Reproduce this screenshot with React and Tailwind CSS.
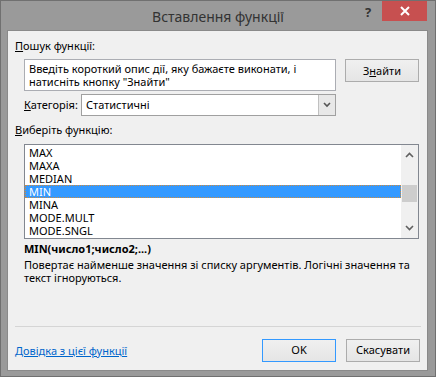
export default function App() {
  const items = ["MAX", "MAXA", "MEDIAN", "MIN", "MINA", "MODE.MULT", "MODE.SNGL"];
  return (
    <div className="w-[436px] h-[377px] bg-[#9a9a9a] border border-[#707070] flex flex-col font-['Noto_Sans',sans-serif] text-[11px] text-black overflow-hidden">
      {/* Title bar */}
      <div className="relative h-[29px] flex justify-center">
        <div className="pt-[6px] text-[14px] leading-[20px] text-[#333333]">Вставлення функції</div>
        <div className="absolute left-[361px] top-[2px] w-[12px] text-center text-[13px] font-bold leading-[18px] text-[#333333]">?</div>
        <div className="absolute right-[8px] top-0 w-[45px] h-[20px] bg-[#c75050] flex items-center justify-center">
          <svg width="10" height="10" viewBox="0 0 10 10">
            <path d="M1 1 L9 9 M9 1 L1 9" stroke="white" strokeWidth="2" />
          </svg>
        </div>
      </div>
      {/* Client */}
      <div className="ml-[6px] w-[421px] h-[341px] border border-[#8a8a8a] bg-[#f0f0f0] flex flex-col pl-[7px] pr-[7px] pt-[7px]">
        <div className="leading-[16px] h-[16px]"><span className="underline">П</span>ошук функції:</div>
        <div className="mt-[5px] flex items-start">
          <div className="ml-[9px] w-[312px] h-[32px] bg-white border border-[#abadb3] px-[4px] pt-[2px] leading-[13px]">
            Введіть короткий опис дії, яку бажаєте виконати, і натисніть кнопку "Знайти"
          </div>
          <button className="ml-[9px] w-[74px] h-[23px] border border-[#acacac] bg-[linear-gradient(#f0f0f0,#e5e5e5)] flex items-center justify-center leading-[16px]">
            З<span className="underline">н</span>айти
          </button>
        </div>
        <div className="mt-[3px] flex items-center h-[22px]">
          <div className="ml-[9px] w-[57px]"><span className="underline">К</span>атегорія:</div>
          <div className="w-[255px] h-[22px] bg-white border border-[#a0a0a0] flex">
            <div className="flex-1 pl-[4px] leading-[20px]">Статистичні</div>
            <div className="w-[17px] h-full bg-[#e8e8e8] border-l border-[#c0c0c0] flex items-center justify-center">
              <svg width="8" height="6" viewBox="0 0 8 6">
                <path d="M1 1 L4 4 L7 1" stroke="#555" strokeWidth="1.6" fill="none" />
              </svg>
            </div>
          </div>
        </div>
        <div className="mt-[6px] leading-[16px] h-[16px]"><span className="underline">В</span>иберіть функцію:</div>
        <div className="mt-[6px] ml-[9px] w-[395px] h-[95px] border border-[#828790] bg-white flex">
          <div className="flex-1 pt-[1px]">
            {items.map((it) => (
              <div
                key={it}
                className={
                  it === "MIN"
                    ? "h-[13px] leading-[11px] pl-[3px] bg-[#3399ff] text-white border border-dotted border-[#d08a3a]"
                    : "h-[13px] leading-[13px] pl-[4px]"
                }
              >
                {it}
              </div>
            ))}
          </div>
          <div className="w-[17px] bg-[#f0f0f0] flex flex-col items-center">
            <div className="h-[20px] flex items-center justify-center">
              <svg width="9" height="6" viewBox="0 0 9 6">
                <path d="M1 5 L4.5 1.5 L8 5" stroke="#606060" strokeWidth="1.6" fill="none" />
              </svg>
            </div>
            <div className="flex-1 w-full">
              <div className="mt-[20px] mx-auto w-[15px] h-[17px] bg-[#cdcdcd]"></div>
            </div>
            <div className="h-[20px] flex items-center justify-center">
              <svg width="9" height="6" viewBox="0 0 9 6">
                <path d="M1 1 L4.5 4.5 L8 1" stroke="#606060" strokeWidth="1.6" fill="none" />
              </svg>
            </div>
          </div>
        </div>
        <div className="mt-[2px] ml-[9px] font-bold leading-[16px]">MIN(число1;число2;...)</div>
        <div className="ml-[9px] mt-[1px] leading-[13px] w-[395px]">
          Повертає найменше значення зі списку аргументів. Логічні значення та текст ігноруються.
        </div>
        <div className="flex-1"></div>
        <div className="w-[406px] h-px bg-[#d5d5d5]"></div>
        <div className="mt-[12px] flex items-center h-[23px] mb-[8px]">
          <a className="text-[#0066cc] underline leading-[16px]">Довідка з цієї функції</a>
          <div className="flex-1"></div>
          <button className="w-[74px] h-[23px] border border-[#3399ff] bg-[linear-gradient(#f0f0f0,#e5e5e5)]">OK</button>
          <button className="ml-[10px] w-[74px] h-[23px] border border-[#acacac] bg-[linear-gradient(#f0f0f0,#e5e5e5)]">Скасувати</button>
        </div>
      </div>
    </div>
  );
}
